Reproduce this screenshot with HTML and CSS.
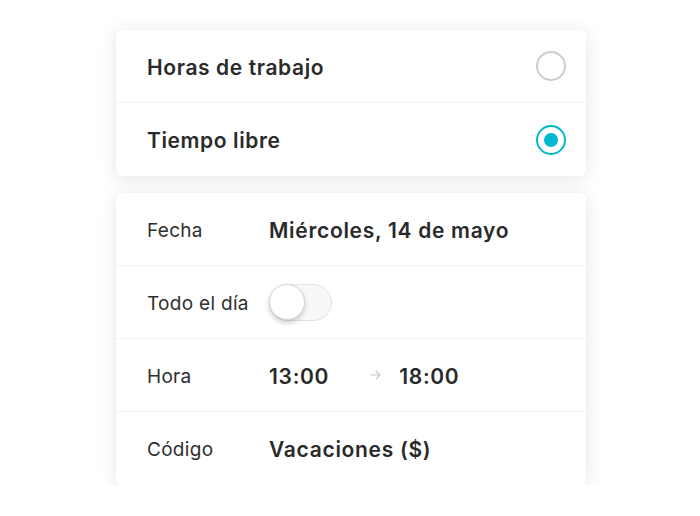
FILE: index.html
```html
<!DOCTYPE html>
<html lang="es">
<head>
<meta charset="utf-8">
<link rel="stylesheet" href="styles.css">
</head>
<body>
<div class="page">
  <div class="card">
    <div class="row option">
      <span class="option-label">Horas de trabajo</span>
      <span class="radio"></span>
    </div>
    <div class="row option">
      <span class="option-label">Tiempo libre</span>
      <span class="radio checked"></span>
    </div>
  </div>
  <div class="card">
    <div class="row field">
      <span class="label">Fecha</span>
      <span class="value">Miércoles, 14 de mayo</span>
    </div>
    <div class="row field">
      <span class="label">Todo el día</span>
      <span class="toggle"><span class="knob"></span></span>
    </div>
    <div class="row field">
      <span class="label">Hora</span>
      <span class="value">13:00</span>
      <svg class="arrow" width="11" height="10" viewBox="0 0 11 10"><path d="M0.5 5H10M6 1L10 5L6 9" fill="none" stroke="#c8c8c8" stroke-width="1.2"/></svg>
      <span class="value">18:00</span>
    </div>
    <div class="row field">
      <span class="label">Código</span>
      <span class="value">Vacaciones ($)</span>
    </div>
  </div>
</div>
</body>
</html>
```
FILE: styles.css
```css
html, body {
  margin: 0;
  padding: 0;
  background: #ffffff;
}
body {
  font-family: Inter, "Noto Sans", sans-serif;
  color: #2a2a2a;
}
.page {
  width: 470px;
  margin-left: 116px;
  padding-top: 30px;
  display: flex;
  flex-direction: column;
  gap: 17px;
}
.card {
  background: #fff;
  border-radius: 6px;
  box-shadow: 0 2px 18px rgba(0, 0, 0, 0.11);
  display: flex;
  flex-direction: column;
}
.row {
  height: 73px;
  box-sizing: border-box;
  display: flex;
  align-items: center;
  padding-left: 31px;
  border-bottom: 1px solid #f1f1f1;
}
.row:last-child {
  border-bottom: none;
}
.option {
  justify-content: space-between;
  padding-right: 20px;
}
.option-label {
  font-size: 21px;
  font-weight: 600;
  letter-spacing: 0.6px;
  padding-top: 2px;
}
.radio {
  width: 30px;
  height: 30px;
  box-sizing: border-box;
  border-radius: 50%;
  border: 2px solid #cccccc;
  display: flex;
  align-items: center;
  justify-content: center;
}
.radio.checked {
  border-color: #00b8d0;
}
.radio.checked::after {
  content: "";
  width: 14px;
  height: 14px;
  border-radius: 50%;
  background: #00b8d0;
}
.label {
  width: 122px;
  font-size: 19px;
  font-weight: 400;
  letter-spacing: 0.3px;
  color: #2e2e2e;
  flex-shrink: 0;
  padding-top: 2px;
}
.value {
  font-size: 21px;
  font-weight: 600;
  letter-spacing: 0.7px;
  padding-top: 2px;
}
.arrow {
  margin-left: 41px;
  margin-right: 18px;
}
.toggle {
  width: 63px;
  height: 37px;
  box-sizing: border-box;
  border-radius: 19px;
  border: 1.5px solid #e2e2e2;
  background: #f8f8f8;
  display: flex;
  align-items: center;
}
.knob {
  width: 36px;
  height: 36px;
  box-sizing: border-box;
  margin-left: -1px;
  border-radius: 50%;
  background: #fff;
  border: 1px solid #d4d4d4;
  box-shadow: 0 3px 5px rgba(0, 0, 0, 0.18);
}
```
